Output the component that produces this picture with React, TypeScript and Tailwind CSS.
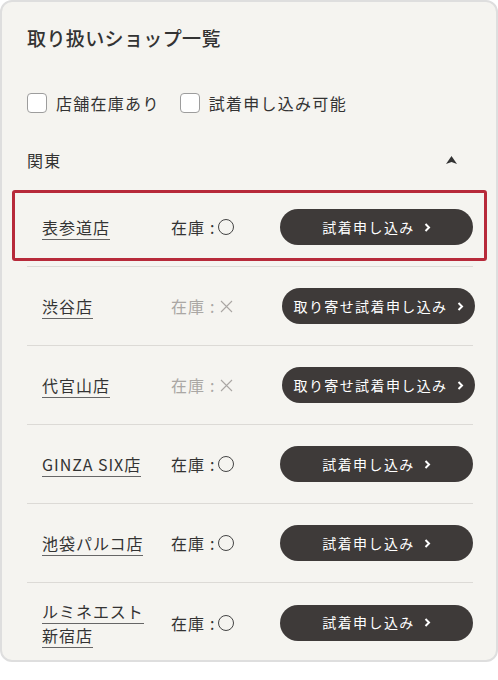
type Shop = {
  name: string[];
  stock: boolean;
  order?: boolean;
  highlight?: boolean;
};

const shops: Shop[] = [
  { name: ['表参道店'], stock: true, highlight: true },
  { name: ['渋谷店'], stock: false, order: true },
  { name: ['代官山店'], stock: false, order: true },
  { name: ['GINZA SIX店'], stock: true },
  { name: ['池袋パルコ店'], stock: true },
  { name: ['ルミネエスト', '新宿店'], stock: true },
];

function Checkbox(props: { label: string }) {
  return (
    <label className="flex items-center gap-[9px]">
      <span className="w-[20px] h-[20px] rounded-[4px] border-[1.5px] border-[#9d9d9d] bg-white" />
      <span className="text-[16px] leading-[24px] tracking-[0.08em] text-[#333]">{props.label}</span>
    </label>
  );
}

function Stock(props: { ok: boolean }) {
  if (props.ok) {
    return (
      <div className="flex items-center text-[16px] tracking-[0.06em] text-[#333]">
        <span>在庫</span>
        <span className="ml-[5px] mr-[3px]">:</span>
        <span className="w-[16px] h-[16px] rounded-full border border-[#444]" />
      </div>
    );
  }
  return (
    <div className="flex items-center text-[16px] tracking-[0.06em] text-[#aaa7a4]">
      <span>在庫</span>
      <span className="ml-[5px] mr-[5px]">:</span>
      <svg width="13" height="13" viewBox="0 0 13 13">
        <path d="M1 1 L12 12 M12 1 L1 12" stroke="#aaa7a4" strokeWidth="1.1" />
      </svg>
    </div>
  );
}

function ShopRow(props: { shop: Shop; last: boolean }) {
  const { shop } = props;
  return (
    <li
      className={`relative flex items-center h-[79px] pl-[15px] ${
        props.last ? '' : 'border-b border-[#dcdad6]'
      }`}
    >
      {shop.highlight && (
        <div className="absolute left-[-15px] right-[-14px] top-[2px] bottom-[5px] border-[3px] border-[#b72a3a] rounded-[3px]" />
      )}
      <div className="w-[129px] text-[16px] leading-[24px] tracking-[0.06em] text-[#333]">
        {shop.name.map((line, i) => (
          <span key={line}>
            {i > 0 && <br />}
            <span className="border-b border-[#666]">{line}</span>
          </span>
        ))}
      </div>
      <div className="w-[109px]">
        <Stock ok={shop.stock} />
      </div>
      <button
        className={`flex items-center justify-center gap-[9px] w-[193px] h-[36px] rounded-full bg-[#3e3a39] text-white text-[14px] tracking-[0.1em] ${
          shop.order ? 'translate-x-[2px]' : ''
        }`}
      >
        <span>{shop.order ? '取り寄せ試着申し込み' : '試着申し込み'}</span>
        <svg width="7" height="9" viewBox="0 0 7 9">
          <path d="M1.5 1 L5 4.5 L1.5 8" fill="none" stroke="white" strokeWidth="2" />
        </svg>
      </button>
    </li>
  );
}

export default function App() {
  return (
    <div
      className="min-h-[680px] bg-white"
      style={{ fontFamily: '"Noto Sans CJK JP", "Noto Sans", sans-serif' }}
    >
      <section className="w-[498px] h-[662px] overflow-hidden rounded-[12px] border-2 border-[#dedede] bg-[#f5f4f0] pt-[22px] pl-[25px] pr-[23px]">
        <h2 className="text-[19px] leading-[28px] font-medium tracking-[0.02em] text-[#333]">
          取り扱いショップ一覧
        </h2>
        <div className="flex items-center gap-[20px] mt-[39px]">
          <Checkbox label="店舗在庫あり" />
          <Checkbox label="試着申し込み可能" />
        </div>
        <div className="flex items-center justify-between mt-[33px] h-[24px] pr-[16px]">
          <span className="text-[16px] tracking-[0.08em] text-[#333]">関東</span>
          <svg width="11" height="8" viewBox="0 0 11 8">
            <path d="M5.5 0 L11 8 L5.5 6 L0 8 Z" fill="#333" />
          </svg>
        </div>
        <ul className="mt-[16px]">
          {shops.map((s, i) => (
            <ShopRow key={s.name.join('')} shop={s} last={i === shops.length - 1} />
          ))}
        </ul>
      </section>
    </div>
  );
}
